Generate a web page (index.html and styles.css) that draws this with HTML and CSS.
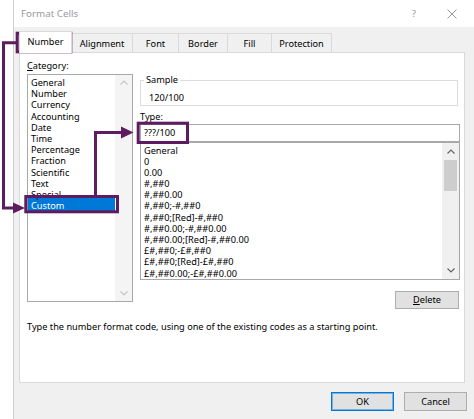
FILE: index.html
```html
<!DOCTYPE html>
<html lang="en">
<head>
<meta charset="utf-8">
<title>Format Cells</title>
<link rel="stylesheet" href="styles.css">
</head>
<body>
<div class="dialog">
  <div class="titlebar">
    <span class="title">Format Cells</span>
    <span class="help">?</span>
    <svg class="close" viewBox="0 0 10 10"><path d="M0.5 0.5 L9.5 9.5 M9.5 0.5 L0.5 9.5"/></svg>
  </div>
  <div class="body">
    <div class="tabs">
      <div class="tab sel t-number">Number</div>
      <div class="tab t-align">Alignment</div>
      <div class="tab t-font">Font</div>
      <div class="tab t-border">Border</div>
      <div class="tab t-fill">Fill</div>
      <div class="tab t-prot">Protection</div>
    </div>
    <div class="panel">
      <div class="cols">
        <div class="catcol">
          <div class="label"><u>C</u>ategory:</div>
          <div class="catlist">
            <div class="items cat-items">
              <div class="item">General</div>
              <div class="item">Number</div>
              <div class="item">Currency</div>
              <div class="item">Accounting</div>
              <div class="item">Date</div>
              <div class="item">Time</div>
              <div class="item">Percentage</div>
              <div class="item">Fraction</div>
              <div class="item">Scientific</div>
              <div class="item">Text</div>
              <div class="item">Special</div>
              <div class="item selected">Custom</div>
            </div>
            <div class="vscroll disabled">
              <svg class="chev" viewBox="0 0 8 5"><polyline points="0.5,4.5 4,1 7.5,4.5"/></svg>
              <svg class="chev" viewBox="0 0 8 5"><polyline points="0.5,0.5 4,4 7.5,0.5"/></svg>
            </div>
          </div>
        </div>
        <div class="rightcol">
          <div class="sample">
            <span class="legend">Sample</span>
            <div class="sample-value">120/100</div>
          </div>
          <div class="label type-label">Type:</div>
          <div class="type-input">???/100</div>
          <div class="fmtlist">
            <div class="items fmt-items">
              <div class="item">General</div>
              <div class="item">0</div>
              <div class="item">0.00</div>
              <div class="item">#,##0</div>
              <div class="item">#,##0.00</div>
              <div class="item">#,##0;-#,##0</div>
              <div class="item">#,##0;[Red]-#,##0</div>
              <div class="item">#,##0.00;-#,##0.00</div>
              <div class="item">#,##0.00;[Red]-#,##0.00</div>
              <div class="item">£#,##0;-£#,##0</div>
              <div class="item">£#,##0;[Red]-£#,##0</div>
              <div class="item">£#,##0.00;-£#,##0.00</div>
            </div>
            <div class="vscroll active">
              <div class="arrow"><svg class="chev" viewBox="0 0 8 5"><polyline points="0.5,4.5 4,1 7.5,4.5"/></svg></div>
              <div class="thumb"></div>
              <div class="spacer"></div>
              <div class="arrow"><svg class="chev" viewBox="0 0 8 5"><polyline points="0.5,0.5 4,4 7.5,0.5"/></svg></div>
            </div>
          </div>
          <div class="delete-row">
            <div class="btn delete"><u>D</u>elete</div>
          </div>
        </div>
      </div>
      <p class="desc">Type the number format code, using one of the existing codes as a starting point.</p>
    </div>
    <div class="actions">
      <div class="btn ok">OK</div>
      <div class="btn">Cancel</div>
    </div>
  </div>
</div>

<svg class="annot" viewBox="0 0 474 419" width="474" height="419">
  <rect x="17.2" y="33.2" width="53.6" height="18.6"/>
  <path d="M16 42.7 H3.5 V208 H15"/>
  <polygon class="head" points="13,202.5 25,208 13,213.5"/>
  <rect x="25.8" y="196.5" width="91.7" height="15.3"/>
  <path d="M95.5 195 V132.5 H123"/>
  <polygon class="head" points="121,126.5 133.5,132.5 121,138.5"/>
  <rect x="138.2" y="123.2" width="49.3" height="19.3"/>
</svg>
</body>
</html>
```
FILE: styles.css
```css
* { box-sizing: border-box; }

body {
  margin: 0;
  width: 474px;
  height: 419px;
  overflow: hidden;
  position: relative;
  background: #ffffff;
  font-family: "Noto Sans", "Open Sans", sans-serif;
  font-size: 9.2px;
  color: #000;
}

.dialog {
  margin-left: 13px;
  border-left: 1px solid #cfcfcf;
  height: 419px;
  display: flex;
  flex-direction: column;
}

.titlebar {
  height: 27px;
  flex: none;
  background: #fff;
  display: flex;
  align-items: center;
  padding-left: 7px;
  color: #9a9a9a;
  font-size: 9.8px;
}
.title { flex: 1; }
.help { width: 10px; text-align: center; margin-right: 28px; }
.close {
  width: 10px;
  height: 10px;
  margin-right: 17px;
  fill: none;
  stroke: #9a9a9a;
  stroke-width: 1;
}

.body {
  flex: 1;
  background: #f0f0f0;
  padding: 4px 9px 0 5px;
}

.tabs {
  display: flex;
  align-items: flex-end;
  height: 21px;
}
.tab {
  height: 19px;
  border: 1px solid #d9d9d9;
  border-bottom: none;
  border-right: none;
  display: flex;
  align-items: center;
  justify-content: center;
  background: #f0f0f0;
}
.tab:last-child { border-right: 1px solid #d9d9d9; }
.tab.sel {
  height: 22px;
  background: #fff;
  margin-bottom: -1px;
  border-right: 1px solid #d9d9d9;
  position: relative;
  z-index: 1;
  padding-bottom: 2px;
}
.t-number { width: 53px; }
.t-align { width: 60px; border-left: none; }
.t-font { width: 46px; }
.t-border { width: 49px; }
.t-fill { width: 44px; }
.t-prot { width: 61px; }

.panel {
  background: #fff;
  border: 1px solid #d9d9d9;
  height: 331px;
  padding: 7px 0 0 7px;
}

.cols {
  display: flex;
  gap: 7px;
}

.label { line-height: 12px; height: 12px; }

.catcol { width: 106px; }
.catlist {
  margin-top: 2px;
  height: 228px;
  border: 1px solid #a8a8a8;
  display: flex;
}
.items { flex: 1; overflow: hidden; }
.item {
  line-height: 11.2px;
  height: 11.2px;
  padding-left: 3px;
  white-space: nowrap;
}
.cat-items { padding-top: 2px; }
.cat-items .selected {
  background: #0078d7;
  color: #fff;
  height: 13.2px;
  margin-top: -2px;
  padding-top: 2px;
  line-height: 11.2px;
}

.vscroll {
  width: 17px;
  flex: none;
  display: flex;
  flex-direction: column;
  align-items: center;
}
.vscroll.disabled {
  background: #f4f4f4;
  justify-content: space-between;
  padding: 5px 0;
}
.chev {
  width: 8px;
  height: 5px;
  fill: none;
  stroke-width: 1.1;
}
.disabled .chev { stroke: #c4c4c4; }
.active { background: #f0f0f0; }
.active .chev { stroke: #606060; }
.arrow {
  height: 17px;
  width: 17px;
  display: flex;
  align-items: center;
  justify-content: center;
}
.thumb {
  width: 13px;
  height: 31px;
  background: #cdcdcd;
}
.spacer { flex: 1; }

.rightcol { width: 320px; }
.sample {
  margin-top: 20px;
  margin-right: 2px;
  border: 1px solid #dcdcdc;
  height: 26px;
}
.legend {
  display: block;
  width: fit-content;
  margin: -7px 0 0 3px;
  padding: 0 2px;
  background: #fff;
  line-height: 12px;
}
.sample-value {
  line-height: 12px;
  margin-top: 6px;
  padding-left: 8px;
}
.type-label { margin-top: 5px; }
.type-input {
  margin-top: 1px;
  height: 18px;
  border: 1px solid #a8a8a8;
  padding-left: 3px;
  line-height: 16px;
}
.fmtlist {
  height: 138px;
  border: 1px solid #a8a8a8;
  display: flex;
}
.fmt-items { padding-top: 1.5px; }

.delete-row {
  display: flex;
  justify-content: flex-end;
  margin-top: 11px;
  padding-right: 1px;
}
.btn {
  width: 63px;
  height: 19px;
  background: #e1e1e1;
  border: 1px solid #adadad;
  text-align: center;
  line-height: 17px;
}
.delete { width: 64px; height: 18px; line-height: 16px; }
.ok {
  border-color: #0078d7;
  box-shadow: inset 0 0 0 1px rgba(0, 120, 215, 0.45);
}

.desc {
  margin: 12px 0 0;
  line-height: 12px;
}

.actions {
  display: flex;
  justify-content: flex-end;
  gap: 10px;
  margin-top: 9px;
  margin-right: -2px;
}

.annot {
  position: absolute;
  left: 0;
  top: 0;
  pointer-events: none;
  fill: none;
  stroke: #5e1c60;
  stroke-width: 3;
}
.annot .head {
  fill: #5e1c60;
  stroke: none;
}
```
